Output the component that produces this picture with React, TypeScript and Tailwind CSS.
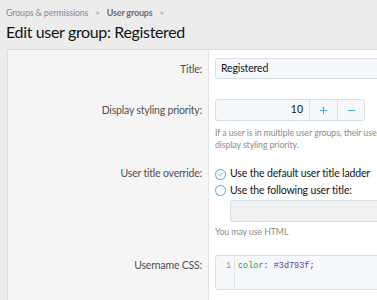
import { Check, Plus, Minus } from "lucide-react";

const font = { fontFamily: 'Lato, "Noto Sans", sans-serif' };

function Row({ label, children, labelClass = "" }: { label: string; children: React.ReactNode; labelClass?: string }) {
  return (
    <div className="flex">
      <div className={`w-[200px] shrink-0 pr-[6px] text-right text-[10.5px] tracking-[-0.2px] text-[#505050] ${labelClass}`}>{label}</div>
      <div className="min-w-0 flex-1 border-l border-[#e4e4e4] bg-white pl-[6px]">{children}</div>
    </div>
  );
}

export default function App() {
  return (
    <div className="h-[300px] overflow-hidden bg-[#ececec] pl-[6px]" style={font}>
      <div className="flex items-center gap-[7px] pt-[6px] text-[9px] leading-[14px] tracking-[-0.2px] text-[#8a8a8a]">
        <span>Groups &amp; permissions</span>
        <span className="text-[8px]">&gt;</span>
        <span className="font-bold text-[#6e6e6e]">User groups</span>
        <span className="text-[8px]">&gt;</span>
      </div>
      <h1 className="text-[16px] leading-[24px] tracking-[-0.35px] text-[#141414]">Edit user group: Registered</h1>
      <div className="ml-px mt-[5px] w-[400px] rounded-tl-[2px] border border-[#dcdcdc] bg-[#f5f5f5]">
        <div className="flex flex-col">
          <Row label="Title:" labelClass="pt-[12px]">
            <div className="pt-[8px] pb-[20px]">
              <div className="flex h-[21px] items-center rounded-[3px] border border-[#d8dfe6] bg-[#f5f9fc] pl-[5px] text-[10.5px] tracking-[-0.15px] text-[#141414]">
                Registered
              </div>
            </div>
          </Row>
          <Row label="Display styling priority:" labelClass="pt-[4px]">
            <div className="flex h-[22px] w-[150px] rounded-[3px] border border-[#d8dfe6] bg-[#f5f9fc] text-[10.5px] text-[#141414]">
              <div className="flex flex-1 items-center justify-end pr-[6px]">10</div>
              <div className="flex w-[28px] items-center justify-center border-l border-[#d8dfe6] text-[#47a7eb]">
                <Plus size={11} strokeWidth={2.2} />
              </div>
              <div className="flex w-[27px] items-center justify-center border-l border-[#d8dfe6] text-[#47a7eb]">
                <Minus size={11} strokeWidth={2.2} />
              </div>
            </div>
            <p className="mt-[6px] whitespace-nowrap text-[8.8px] leading-[12px] tracking-[-0.1px] text-[#8c8c8c]">
              If a user is in multiple user groups, their user
              <br />
              display styling priority.
            </p>
          </Row>
          <Row label="User title override:" labelClass="pt-[15px]">
            <div className="pt-[15px]">
              <div className="flex h-[16px] items-center gap-[4px] whitespace-nowrap text-[10.5px] tracking-[-0.15px] text-[#141414]">
                <span className="flex h-[11px] w-[11px] items-center justify-center rounded-full border border-[#47a7eb] text-[#47a7eb]">
                  <Check size={7} strokeWidth={3} />
                </span>
                Use the default user title ladder
              </div>
              <div className="flex h-[17px] items-center gap-[4px] whitespace-nowrap text-[10.5px] tracking-[-0.15px] text-[#141414]">
                <span className="h-[11px] w-[11px] rounded-full border border-[#47a7eb] bg-white" />
                Use the following user title:
              </div>
              <div className="ml-[15px] mt-px h-[22px] rounded-[3px] border border-[#d8dfe6] bg-[#f0f1f2]" />
              <p className="mt-[3px] text-[8.8px] leading-[13px] tracking-[-0.1px] text-[#8c8c8c]">You may use HTML</p>
            </div>
          </Row>
          <Row label="Username CSS:" labelClass="pt-[20px]">
            <div className="pt-[17px] pb-[20px]">
              <div className="flex h-[35px] rounded-[3px] border border-[#d8dfe6] bg-[#f5f9fc] font-['Liberation_Mono',monospace] text-[8.5px] tracking-normal">
                <div className="w-[19px] border-r border-[#dde2e6] pr-[3px] pt-[4px] text-right text-[#999]">1</div>
                <div className="pl-[3px] pt-[4px] whitespace-nowrap">
                  <span className="text-[#2e8b2e]">color</span>
                  <span className="text-[#333]">: </span>
                  <span className="text-[#5c3fa8]">#3d793f</span>
                  <span className="text-[#333]">;</span>
                </div>
              </div>
            </div>
          </Row>
        </div>
      </div>
    </div>
  );
}
